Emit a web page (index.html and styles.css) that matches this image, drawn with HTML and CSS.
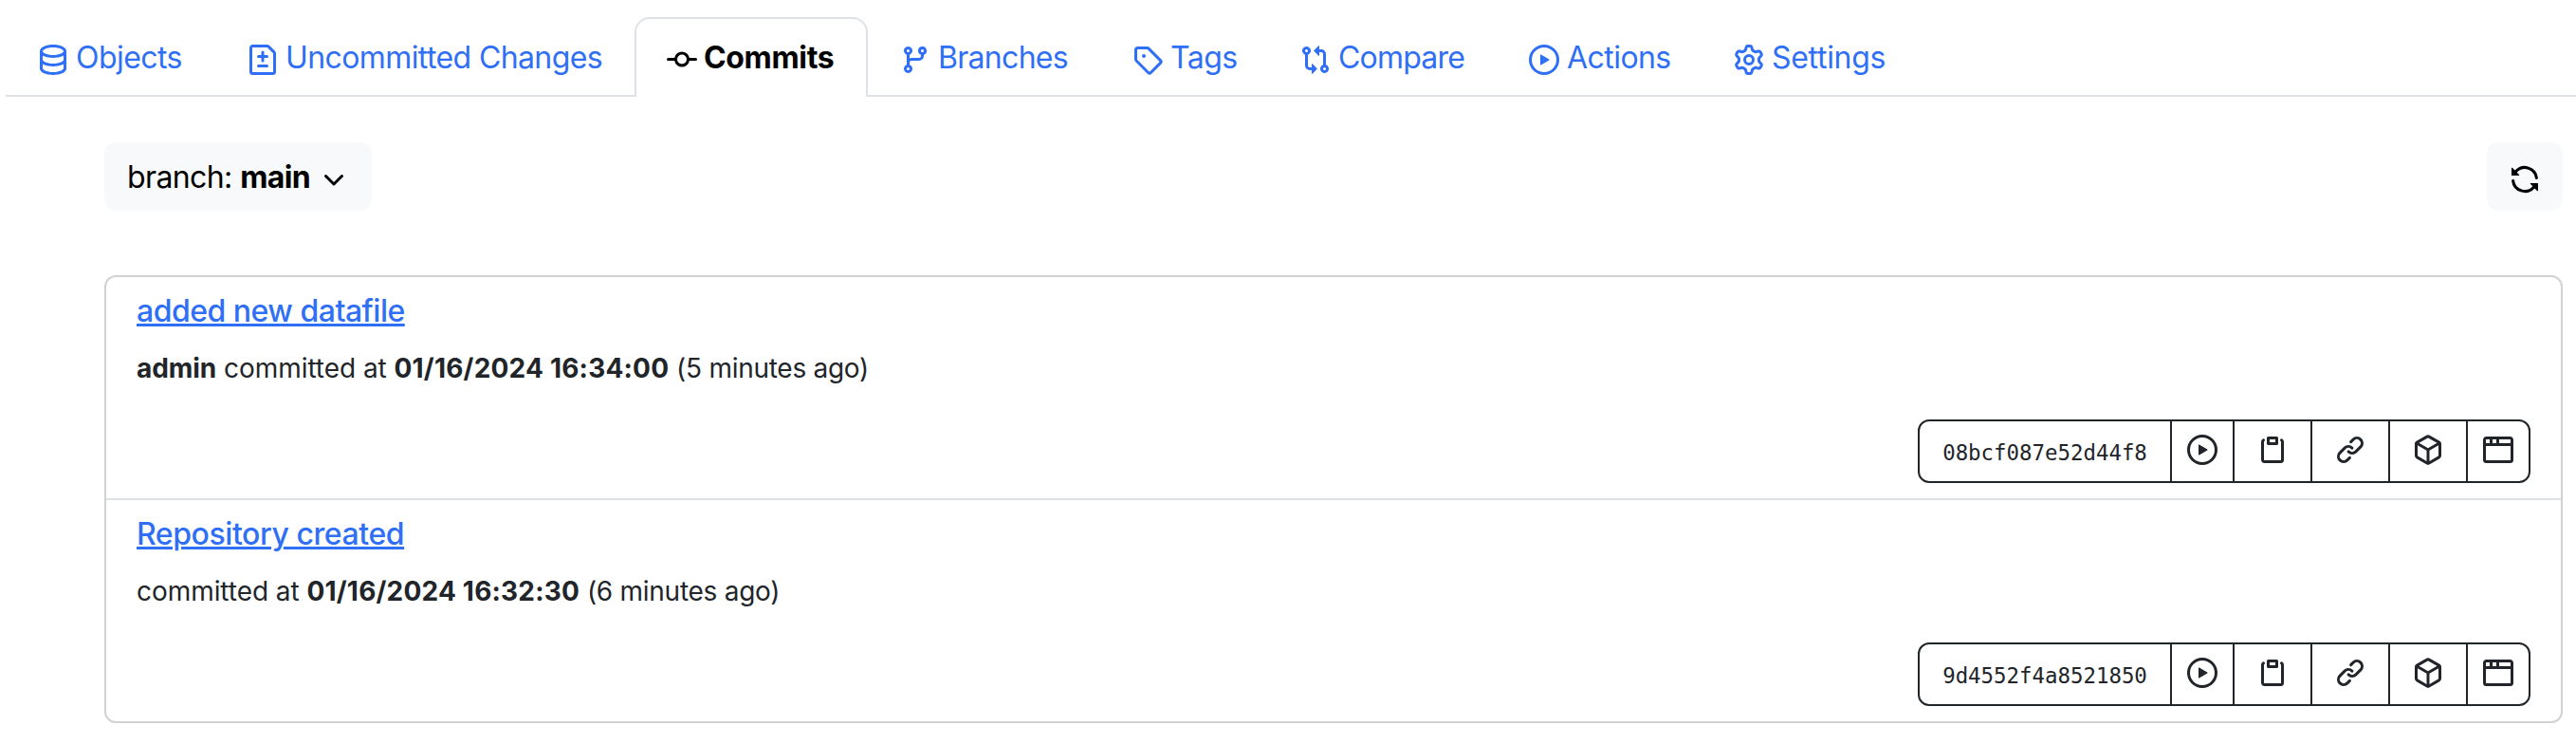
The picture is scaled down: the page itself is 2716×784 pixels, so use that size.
FILE: index.html
```html
<!DOCTYPE html>
<html lang="en">
<head>
<meta charset="utf-8">
<title>Commits</title>
<link rel="stylesheet" href="styles.css">
</head>
<body>
<svg class="sprite" aria-hidden="true">
  <symbol id="database" viewBox="0 0 16 16"><path d="M1 3.5c0-.626.292-1.165.7-1.59.406-.422.956-.767 1.579-1.041C4.525.32 6.195 0 8 0c1.805 0 3.475.32 4.722.869.622.274 1.172.62 1.578 1.04.408.426.7.965.7 1.591v9c0 .626-.292 1.165-.7 1.59-.406.422-.956.767-1.579 1.041C11.476 15.68 9.806 16 8 16c-1.805 0-3.475-.32-4.721-.869-.623-.274-1.173-.62-1.579-1.04-.408-.426-.7-.965-.7-1.591Zm1.5 0c0 .133.058.318.282.551.227.237.591.483 1.101.707C4.898 5.205 6.353 5.5 8 5.5c1.646 0 3.101-.295 4.118-.742.508-.224.873-.471 1.1-.708.224-.232.282-.417.282-.55 0-.133-.058-.318-.282-.551-.227-.237-.591-.483-1.101-.707C11.102 1.795 9.647 1.5 8 1.5c-1.646 0-3.101.295-4.118.742-.508.224-.873.471-1.1.708-.224.232-.282.417-.282.55Zm0 4.5c0 .133.058.318.282.551.227.237.591.483 1.101.707C4.898 9.705 6.353 10 8 10c1.646 0 3.101-.295 4.118-.742.508-.224.873-.471 1.1-.708.224-.232.282-.417.282-.55V5.724c-.241.15-.503.286-.778.407C11.475 6.68 9.805 7 8 7c-1.805 0-3.475-.32-4.721-.869a6.15 6.15 0 0 1-.779-.407Zm0 2.225V12.5c0 .133.058.318.282.55.227.237.592.484 1.1.708 1.016.447 2.471.742 4.118.742 1.647 0 3.102-.295 4.117-.742.51-.224.874-.47 1.101-.707.224-.233.282-.418.282-.551v-2.275c-.241.15-.503.285-.778.406-1.247.549-2.917.869-4.722.869-1.805 0-3.475-.32-4.721-.869a6.327 6.327 0 0 1-.779-.406Z"/></symbol>
  <symbol id="file-diff" viewBox="0 0 16 16"><path d="M1 1.75C1 .784 1.784 0 2.75 0h7.586c.464 0 .909.184 1.237.513l2.914 2.914c.329.328.513.773.513 1.237v9.586A1.75 1.75 0 0 1 13.25 16H2.75A1.75 1.75 0 0 1 1 14.25Zm1.75-.25a.25.25 0 0 0-.25.25v12.5c0 .138.112.25.25.25h10.5a.25.25 0 0 0 .25-.25V4.664a.25.25 0 0 0-.073-.177l-2.914-2.914a.25.25 0 0 0-.177-.073ZM8 3.25a.75.75 0 0 1 .75.75v1.5h1.5a.75.75 0 0 1 0 1.5h-1.5v1.5a.75.75 0 0 1-1.5 0V7h-1.5a.75.75 0 0 1 0-1.5h1.5V4A.75.75 0 0 1 8 3.25Zm-3 8a.75.75 0 0 1 .75-.75h4.5a.75.75 0 0 1 0 1.5h-4.5a.75.75 0 0 1-.75-.75Z"/></symbol>
  <symbol id="git-commit" viewBox="0 0 16 16"><path d="M11.93 8.5a4.002 4.002 0 0 1-7.86 0H.75a.75.75 0 0 1 0-1.5h3.32a4.002 4.002 0 0 1 7.86 0h3.32a.75.75 0 0 1 0 1.5Zm-1.43-.75a2.5 2.5 0 1 0-5 0 2.5 2.5 0 0 0 5 0Z"/></symbol>
  <symbol id="git-branch" viewBox="0 0 16 16"><path d="M9.5 3.25a2.25 2.25 0 1 1 3 2.122V6A2.5 2.5 0 0 1 10 8.5H6a1 1 0 0 0-1 1v1.128a2.251 2.251 0 1 1-1.5 0V5.372a2.25 2.25 0 1 1 1.5 0v1.836A2.493 2.493 0 0 1 6 7h4a1 1 0 0 0 1-1v-.628A2.25 2.25 0 0 1 9.5 3.25Zm-6 0a.75.75 0 1 0 1.5 0 .75.75 0 0 0-1.5 0Zm8.25-.75a.75.75 0 1 0 0 1.5.75.75 0 0 0 0-1.5ZM4.25 12a.75.75 0 1 0 0 1.5.75.75 0 0 0 0-1.5Z"/></symbol>
  <symbol id="tag" viewBox="0 0 16 16"><path d="M1 7.775V2.75C1 1.784 1.784 1 2.75 1h5.025c.464 0 .91.184 1.238.513l6.25 6.25a1.75 1.75 0 0 1 0 2.474l-5.026 5.026a1.75 1.75 0 0 1-2.474 0l-6.25-6.25A1.752 1.752 0 0 1 1 7.775Zm1.5 0c0 .066.026.13.073.177l6.25 6.25a.25.25 0 0 0 .354 0l5.025-5.025a.25.25 0 0 0 0-.354l-6.25-6.25a.25.25 0 0 0-.177-.073H2.75a.25.25 0 0 0-.25.25ZM6 5a1 1 0 1 1 0 2 1 1 0 0 1 0-2Z"/></symbol>
  <symbol id="git-compare" viewBox="0 0 16 16"><path d="M9.573.677A.25.25 0 0 1 10 .854V2.5h1A2.5 2.5 0 0 1 13.5 5v5.628a2.251 2.251 0 1 1-1.5 0V5a1 1 0 0 0-1-1h-1v1.646a.25.25 0 0 1-.427.177L7.177 3.427a.25.25 0 0 1 0-.354ZM6 12v-1.646a.25.25 0 0 1 .427-.177l2.396 2.396a.25.25 0 0 1 0 .354l-2.396 2.396A.25.25 0 0 1 6 15.146V13.5H5A2.5 2.5 0 0 1 2.5 11V5.372a2.25 2.25 0 1 1 1.5 0V11a1 1 0 0 0 1 1ZM4 3.25a.75.75 0 1 0-1.5 0 .75.75 0 0 0 1.5 0ZM12.75 12a.75.75 0 1 0 0 1.5.75.75 0 0 0 0-1.5Z"/></symbol>
  <symbol id="play" viewBox="0 0 16 16"><path d="M8 0a8 8 0 1 1 0 16A8 8 0 0 1 8 0ZM1.5 8a6.5 6.5 0 1 0 13 0 6.5 6.5 0 0 0-13 0Zm4.879-2.773 4.264 2.559a.25.25 0 0 1 0 .428l-4.264 2.559A.25.25 0 0 1 6 10.559V5.442a.25.25 0 0 1 .379-.215Z"/></symbol>
  <symbol id="gear" viewBox="0 0 16 16"><path d="M8 0a8.2 8.2 0 0 1 .701.031C9.444.095 9.99.645 10.16 1.29l.288 1.107c.018.066.079.158.212.224.231.114.454.243.668.386.123.082.233.09.299.071l1.103-.303c.644-.176 1.392.021 1.82.63.27.385.506.792.704 1.218.315.675.111 1.422-.364 1.891l-.814.806c-.049.048-.098.147-.088.294.016.257.016.515 0 .772-.01.147.038.246.088.294l.814.806c.475.469.679 1.216.364 1.891a7.977 7.977 0 0 1-.704 1.217c-.428.61-1.176.807-1.82.63l-1.102-.302c-.067-.019-.177-.011-.3.071a5.909 5.909 0 0 1-.668.386c-.133.066-.194.158-.211.224l-.29 1.106c-.168.646-.715 1.196-1.458 1.26a8.006 8.006 0 0 1-1.402 0c-.743-.064-1.289-.614-1.458-1.26l-.289-1.106c-.018-.066-.079-.158-.212-.224a5.738 5.738 0 0 1-.668-.386c-.123-.082-.233-.09-.299-.071l-1.103.303c-.644.176-1.392-.021-1.82-.63a8.12 8.12 0 0 1-.704-1.218c-.315-.675-.111-1.422.363-1.891l.815-.806c.05-.048.098-.147.088-.294a6.214 6.214 0 0 1 0-.772c.01-.147-.038-.246-.088-.294l-.815-.806C.635 6.045.431 5.298.746 4.623a7.92 7.92 0 0 1 .704-1.217c.428-.61 1.176-.807 1.82-.63l1.102.302c.067.019.177.011.3-.071.214-.143.437-.272.668-.386.133-.066.194-.158.211-.224l.29-1.106C6.009.645 6.556.095 7.299.03 7.53.01 7.764 0 8 0Zm-.571 1.525c-.036.003-.108.036-.137.146l-.289 1.105c-.147.561-.549.967-.998 1.189-.173.086-.34.183-.5.29-.417.278-.97.423-1.529.27l-1.103-.303c-.109-.03-.175.016-.195.045-.22.312-.412.644-.573.99-.014.031-.021.11.059.19l.815.806c.411.406.562.957.53 1.456a4.709 4.709 0 0 0 0 .582c.032.499-.119 1.05-.53 1.456l-.815.806c-.081.08-.073.159-.059.19.162.346.353.677.573.989.02.03.085.076.195.046l1.102-.303c.56-.153 1.113-.008 1.53.27.161.107.328.204.501.29.447.222.85.629.997 1.189l.289 1.105c.029.109.101.143.137.146a6.6 6.6 0 0 0 1.142 0c.036-.003.108-.036.137-.146l.289-1.105c.147-.561.549-.967.998-1.189.173-.086.34-.183.5-.29.417-.278.97-.423 1.529-.27l1.103.303c.109.029.175-.016.195-.045.22-.313.411-.644.573-.99.014-.031.021-.11-.059-.19l-.815-.806c-.411-.406-.562-.957-.53-1.456a4.709 4.709 0 0 0 0-.582c-.032-.499.119-1.05.53-1.456l.815-.806c.081-.08.073-.159.059-.19a6.464 6.464 0 0 0-.573-.989c-.02-.03-.085-.076-.195-.046l-1.102.303c-.56.153-1.113.008-1.53-.27a4.44 4.44 0 0 0-.501-.29c-.447-.222-.85-.629-.997-1.189l-.289-1.105c-.029-.11-.101-.143-.137-.146a6.6 6.6 0 0 0-1.142 0ZM11 8a3 3 0 1 1-6 0 3 3 0 0 1 6 0ZM9.5 8a1.5 1.5 0 1 0-3.001.001A1.5 1.5 0 0 0 9.5 8Z"/></symbol>
  <symbol id="chevron" viewBox="0 0 16 16"><path d="M12.78 5.22a.749.749 0 0 1 0 1.06l-4.25 4.25a.749.749 0 0 1-1.06 0L3.22 6.28a.749.749 0 1 1 1.06-1.06L8 8.939l3.72-3.719a.749.749 0 0 1 1.06 0Z"/></symbol>
  <symbol id="sync" viewBox="0 0 16 16"><path d="M1.705 8.005a.75.75 0 0 1 .834.656 5.5 5.5 0 0 0 9.592 2.97l-1.204-1.204a.25.25 0 0 1 .177-.427h3.646a.25.25 0 0 1 .25.25v3.646a.25.25 0 0 1-.427.177l-1.38-1.38A7.002 7.002 0 0 1 1.05 8.84a.75.75 0 0 1 .656-.834ZM8 2.5a5.487 5.487 0 0 0-4.131 1.869l1.204 1.204A.25.25 0 0 1 4.896 6H1.25A.25.25 0 0 1 1 5.75V2.104a.25.25 0 0 1 .427-.177l1.38 1.38A7.002 7.002 0 0 1 14.95 7.16a.75.75 0 0 1-1.49.178A5.5 5.5 0 0 0 8 2.5Z"/></symbol>
  <symbol id="clippy" viewBox="0 0 16 16"><path d="M5.75 1a.75.75 0 0 0-.75.75v3c0 .414.336.75.75.75h4.5a.75.75 0 0 0 .75-.75v-3a.75.75 0 0 0-.75-.75h-4.5zm.75 3V2.5h3V4h-3zm-2.874-.467a.75.75 0 0 0-.752-1.298A1.75 1.75 0 0 0 2 3.75v9.5c0 .966.784 1.75 1.75 1.75h8.5A1.75 1.75 0 0 0 14 13.25v-9.5a1.75 1.75 0 0 0-.874-1.515.75.75 0 1 0-.752 1.298.25.25 0 0 1 .126.217v9.5a.25.25 0 0 1-.25.25h-8.5a.25.25 0 0 1-.25-.25v-9.5a.25.25 0 0 1 .126-.217z"/></symbol>
  <symbol id="link" viewBox="0 0 16 16"><path d="m7.775 3.275 1.25-1.25a3.5 3.5 0 1 1 4.95 4.95l-2.5 2.5a3.5 3.5 0 0 1-4.95 0 .751.751 0 0 1 .018-1.042.751.751 0 0 1 1.042-.018 1.998 1.998 0 0 0 2.83 0l2.5-2.5a2.002 2.002 0 0 0-2.83-2.83l-1.25 1.25a.751.751 0 0 1-1.042-.018.751.751 0 0 1-.018-1.042Zm-4.69 9.64a1.998 1.998 0 0 0 2.83 0l1.25-1.25a.751.751 0 0 1 1.042.018.751.751 0 0 1 .018 1.042l-1.25 1.25a3.5 3.5 0 1 1-4.95-4.95l2.5-2.5a3.5 3.5 0 0 1 4.95 0 .751.751 0 0 1-.018 1.042.751.751 0 0 1-1.042.018 1.998 1.998 0 0 0-2.83 0l-2.5 2.5a1.998 1.998 0 0 0 0 2.83Z"/></symbol>
  <symbol id="package" viewBox="0 0 16 16"><path d="m8.878.392 5.25 3.045c.54.314.872.89.872 1.514v6.098a1.75 1.75 0 0 1-.872 1.514l-5.25 3.045a1.75 1.75 0 0 1-1.756 0l-5.25-3.045A1.75 1.75 0 0 1 1 11.049V4.951c0-.624.332-1.201.872-1.514L7.122.392a1.75 1.75 0 0 1 1.756 0ZM7.875 1.69l-4.63 2.685L8 7.133l4.755-2.758-4.63-2.685a.248.248 0 0 0-.25 0ZM2.5 5.677v5.372c0 .09.047.171.125.216l4.625 2.683V8.432Zm6.25 8.271 4.625-2.683a.25.25 0 0 0 .125-.216V5.677L8.75 8.432Z"/></symbol>
  <symbol id="browser" viewBox="0 0 16 16"><path d="M0 2.75C0 1.784.784 1 1.75 1h12.5c.966 0 1.75.784 1.75 1.75v10.5A1.75 1.75 0 0 1 14.25 15H1.75A1.75 1.75 0 0 1 0 13.25ZM14.5 6h-13v7.25c0 .138.112.25.25.25h12.5a.25.25 0 0 0 .25-.25Zm-6-3.5v2h6V2.75a.25.25 0 0 0-.25-.25ZM5 2.5v2h2v-2Zm-3.25 0a.25.25 0 0 0-.25.25V4.5h2v-2Z"/></symbol>
</svg>

<nav class="tabs">
  <a class="tab tab-objects"><svg class="icon"><use href="#database"/></svg><span class="label">Objects</span></a>
  <a class="tab tab-changes"><svg class="icon"><use href="#file-diff"/></svg><span class="label">Uncommitted Changes</span></a>
  <a class="tab tab-commits active"><svg class="icon"><use href="#git-commit"/></svg><span class="label">Commits</span></a>
  <a class="tab tab-branches"><svg class="icon"><use href="#git-branch"/></svg><span class="label">Branches</span></a>
  <a class="tab tab-tags"><svg class="icon"><use href="#tag"/></svg><span class="label">Tags</span></a>
  <a class="tab tab-compare"><svg class="icon"><use href="#git-compare"/></svg><span class="label">Compare</span></a>
  <a class="tab tab-actions"><svg class="icon"><use href="#play"/></svg><span class="label">Actions</span></a>
  <a class="tab tab-settings"><svg class="icon"><use href="#gear"/></svg><span class="label">Settings</span></a>
</nav>

<main class="content">
  <div class="toolbar">
    <button class="btn-light branch"><span class="branch-text">branch: <strong>main</strong></span><svg class="chevron"><use href="#chevron"/></svg></button>
    <button class="btn-light refresh" aria-label="Refresh"><svg class="icon"><use href="#sync"/></svg></button>
  </div>

  <section class="card">
    <article class="commit">
      <h6 class="title"><a class="title-link added">added new datafile</a></h6>
      <p class="meta"><strong>admin</strong> committed at <strong class="date">01/16/2024 16:34:00</strong> <span class="ago">(5 minutes ago)</span></p>
      <div class="group">
        <span class="cell hash">08bcf087e52d44f8</span>
        <span class="cell narrow"><svg class="icon"><use href="#play"/></svg></span>
        <span class="cell"><svg class="icon"><use href="#clippy"/></svg></span>
        <span class="cell"><svg class="icon"><use href="#link"/></svg></span>
        <span class="cell"><svg class="icon"><use href="#package"/></svg></span>
        <span class="cell narrow"><svg class="icon"><use href="#browser"/></svg></span>
      </div>
    </article>
    <article class="commit">
      <h6 class="title"><a class="title-link repo">Repository created</a></h6>
      <p class="meta">committed at <strong class="date">01/16/2024 16:32:30</strong> <span class="ago">(6 minutes ago)</span></p>
      <div class="group">
        <span class="cell hash">9d4552f4a8521850</span>
        <span class="cell narrow"><svg class="icon"><use href="#play"/></svg></span>
        <span class="cell"><svg class="icon"><use href="#clippy"/></svg></span>
        <span class="cell"><svg class="icon"><use href="#link"/></svg></span>
        <span class="cell"><svg class="icon"><use href="#package"/></svg></span>
        <span class="cell narrow"><svg class="icon"><use href="#browser"/></svg></span>
      </div>
    </article>
  </section>
</main>
</body>
</html>
```
FILE: styles.css
```css
* { box-sizing: border-box; }
body {
  margin: 0;
  background: #fff;
  color: #212529;
  font-family: Inter, "Liberation Sans", sans-serif;
  font-size: 28px;
}
.sprite { display: none; }
.icon { width: 32px; height: 32px; flex: none; fill: currentColor; }

.tabs {
  display: flex;
  height: 102px;
  margin-left: 6px;
  padding-top: 18px;
  border-bottom: 2px solid #dee2e6;
}
.tab {
  display: flex;
  align-items: center;
  height: 84px;
  padding: 4px 32px 0;
  border: 2px solid transparent;
  border-bottom: 0;
  color: #2f6ff5;
  font-size: 32px;
  line-height: 48px;
  white-space: nowrap;
}
.tab .label { margin: -5px 0 0 8px; letter-spacing: -0.55px; }
.active {
  border-color: #dee2e6;
  border-radius: 16px 16px 0 0;
  background: #fff;
  color: #000;
  font-weight: 700;
}
.tab-objects { width: 221px; }
.tab-changes { width: 442px; }
.tab-commits { width: 246px; }
.tab-branches { width: 245px; }
.tab-tags { width: 177px; }
.tab-compare { width: 241px; }
.tab-actions { width: 216px; }
.tab-settings { width: 228px; }
.tab-changes .label { letter-spacing: -0.6px; }
.tab-commits .label { margin-left: 7px; letter-spacing: -0.35px; }
.tab-branches .label { letter-spacing: -0.7px; }
.tab-compare .label { letter-spacing: -0.8px; }
.tab-settings .label { letter-spacing: -0.3px; }

.content { padding: 48px 14px 0 110px; }
.toolbar { display: flex; justify-content: space-between; margin-bottom: 68px; }
.btn-light {
  display: flex;
  align-items: center;
  height: 72px;
  padding: 0 24px;
  border: 0;
  border-radius: 12px;
  background: #f8f9fa;
  color: #000;
  font-family: inherit;
  font-size: 32px;
}
.btn-light strong { font-weight: 700; }
.branch { width: 282px; justify-content: space-between; }
.branch-text { letter-spacing: -0.6px; }
.chevron { width: 32px; height: 32px; margin-top: 8px; fill: currentColor; }
.refresh { width: 80px; }
.refresh .icon { margin-top: 6px; }

.card { border: 2px solid #d2d2d2; border-radius: 12px; }
.commit { display: flex; flex-direction: column; height: 233px; padding: 17px 32px 0; }
.commit + .commit { height: 235px; border-top: 2px solid #dee2e6; }
.title { margin: 0; font-size: 32px; font-weight: 500; line-height: 38px; }
.title-link {
  color: #2f6ff5;
  letter-spacing: -0.5px;
  text-decoration: underline 3px;
  text-underline-offset: 2px;
}
.repo { letter-spacing: -0.43px; }
.meta { margin: 20px 0 0; font-size: 28px; line-height: 42px; letter-spacing: -0.05px; white-space: nowrap; }
.date { letter-spacing: 0.2px; }
.ago { letter-spacing: -0.27px; }
.group {
  display: flex;
  align-self: flex-end;
  height: 67px;
  margin-top: 33px;
  border: 2px solid #212529;
  border-radius: 12px;
}
.cell { display: flex; align-items: center; justify-content: center; width: 82px; padding-bottom: 3px; }
.cell + .cell { border-left: 2px solid #212529; }
.narrow { width: 66px; }
.hash {
  width: 264px;
  padding: 2px 0 0;
  font-family: "DejaVu Sans Mono", monospace;
  font-size: 22.4px;
}
```
